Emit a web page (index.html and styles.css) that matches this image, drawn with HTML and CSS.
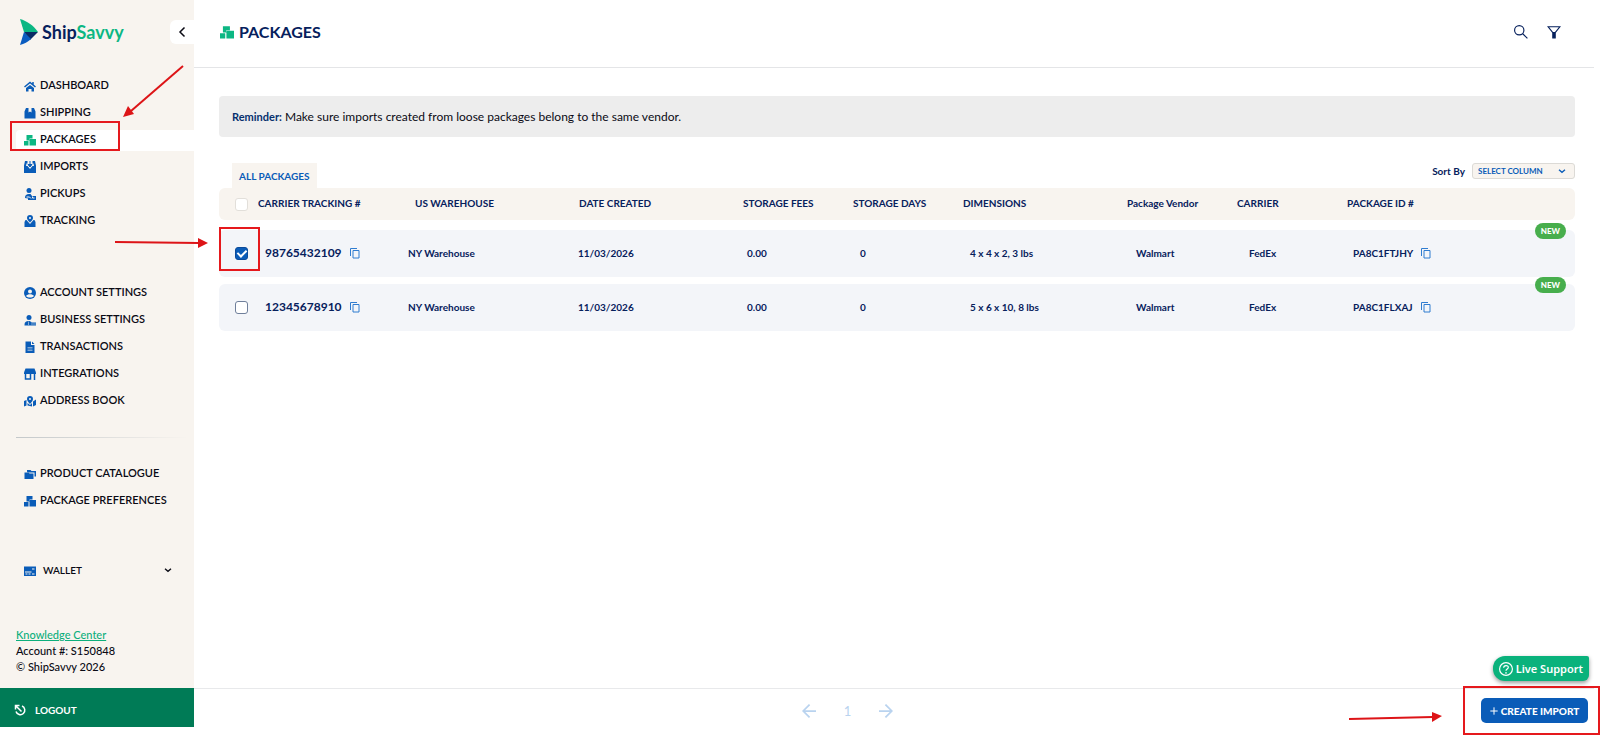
FILE: index.html
```html
<!DOCTYPE html>
<html lang="en">

<head>
    <meta charset="UTF-8">
    <meta name="viewport" content="width=device-width, initial-scale=1.0">
    <title>ShipSavvy - Packages</title>
    <link rel="stylesheet" href="styles.css">
</head>

<body>
    <!-- icon shapes -->
    <svg class="sprite" aria-hidden="true">
        <symbol id="i-home" viewBox="0 0 24 24">
            <path d="M1 14 12 5l11 9M18 4v5" fill="none" stroke="currentColor" stroke-width="3" />
            <path d="M12 10l8 6v7h-5v-5H9v5H4v-7z" fill="currentColor" />
        </symbol>
        <symbol id="i-ship" viewBox="0 0 24 24">
            <path d="M4 2h5v9l3-2 3 2V2h5l3 7v14H1V9z" fill="currentColor" />
        </symbol>
        <symbol id="i-boxes" viewBox="0 0 24 24">
            <path d="M5 2h12v7h-6v4H5zM0 14h9v9H0zM12 10h12v13H11V12z" fill="currentColor" />
        </symbol>
        <symbol id="i-import" viewBox="0 0 24 24">
            <path d="M2 0h5v5H5l-1 5h3l5 6 5-6h3l-1-5h-2V0h5l2 9v15H0V9z" fill="currentColor" />
            <path d="M12 0v8M8 7h8l-4 5z" stroke="currentColor" fill="currentColor" stroke-width="2" />
        </symbol>
        <symbol id="i-pickup" viewBox="0 0 24 24">
            <circle cx="10" cy="5" r="5" fill="currentColor" />
            <path d="M2 20c0-6 3-8 8-8h3l3 4h8v8H8v-3z" fill="currentColor" />
            <path d="M5 18h6l3 3M17 17v3h4" fill="none" stroke="#f8f4ef" stroke-width="2" />
        </symbol>
        <symbol id="i-track" viewBox="0 0 24 24">
            <path fill-rule="evenodd" d="M12 0a6 6 0 0 1 6 6c0 4-6 9-6 9S6 10 6 6a6 6 0 0 1 6-6zm0 4a2 2 0 1 0 0 4 2 2 0 0 0 0-4z" fill="currentColor" />
            <path d="M5 10H3l-2 4v10h22V14l-2-4h-2l-7 8z" fill="currentColor" />
        </symbol>
        <symbol id="i-account" viewBox="0 0 24 24">
            <circle cx="12" cy="12" r="12" fill="currentColor" />
            <circle cx="12" cy="9" r="4" fill="#f8f4ef" />
            <path d="M4 18c3-5 13-5 16 0-4 4-12 4-16 0z" fill="#f8f4ef" />
        </symbol>
        <symbol id="i-business" viewBox="0 0 24 24">
            <circle cx="10" cy="7" r="5" fill="currentColor" />
            <path d="M1 22c0-6 3-8 8-8 3 0 5 1 6 3h9v6H1z" fill="currentColor" />
            <path d="M9 15v7M14 20h10" stroke="#f8f4ef" stroke-width="1" />
        </symbol>
        <symbol id="i-doc" viewBox="0 0 24 24">
            <path d="M3 1h11v7h7v16H3zM16 1l5 5h-5z" fill="currentColor" />
            <path d="M7 13h10M7 16h10M7 19h10" stroke="#f8f4ef" stroke-width="1" />
        </symbol>
        <symbol id="i-store" viewBox="0 0 24 24">
            <path d="M3 1h18l3 8v3H0V9z" fill="currentColor" />
            <path d="M3 12v10h10V12M21 12v12" fill="none" stroke="currentColor" stroke-width="3" />
        </symbol>
        <symbol id="i-map" viewBox="0 0 24 24">
            <path fill-rule="evenodd" d="M12 2a6 6 0 0 1 6 6c0 4-6 10-6 10S6 12 6 8a6 6 0 0 1 6-6zm0 4a2 2 0 1 0 0 4 2 2 0 0 0 0-4z" fill="currentColor" />
            <path d="M0 12l5-2v11l-5 2zM7 16l5 4 4-4v7l-9-2zM18 13l6-4v11l-6 3z" fill="currentColor" />
        </symbol>
        <symbol id="i-folders" viewBox="0 0 24 24">
            <path d="M6 7V4h7l2 2h9v11h-3V9H7z" fill="currentColor" />
            <path d="M1 9h8l2 2h8v11H1z" fill="currentColor" />
        </symbol>
        <symbol id="i-wallet" viewBox="0 0 24 24">
            <path d="M0 3h24v19H0z" fill="currentColor" />
            <path d="M16 8h5M2 14h13M3 18h4M9 18h4M16 18h5" stroke="#f8f4ef" stroke-width="2" />
        </symbol>
        <symbol id="i-logout" viewBox="0 0 24 24">
            <path d="M16 4a9 9 0 1 1-12 11M3 11V3h8M4 4l11 11" fill="none" stroke="currentColor" stroke-width="3" />
        </symbol>
        <symbol id="i-copy" viewBox="0 0 24 24">
            <path d="M3 18V3h13M8 7h12v15H8z" fill="none" stroke="currentColor" stroke-width="2" />
        </symbol>
        <symbol id="i-left" viewBox="0 0 24 24">
            <path d="M17 3l-9 9 9 9" fill="none" stroke="currentColor" stroke-width="3" />
        </symbol>
        <symbol id="i-down" viewBox="0 0 24 24">
            <path d="M3 8l9 8 9-8" fill="none" stroke="currentColor" stroke-width="4" />
        </symbol>
        <symbol id="i-search" viewBox="0 0 24 24">
            <path d="M15 15l8 8M17 9A8 8 0 1 1 1 9a8 8 0 0 1 16 0z" fill="none" stroke="currentColor" stroke-width="2" />
        </symbol>
        <symbol id="i-filter" viewBox="0 0 24 24">
            <path d="M2 3h20l-8 10v9h-4v-9z" fill="none" stroke="currentColor" stroke-width="2" />
            <path d="M10 12h4v10h-4z" fill="currentColor" />
        </symbol>
        <symbol id="i-prev" viewBox="0 0 24 24">
            <path d="M24 12H3M13 1L2 12l11 11" fill="none" stroke="currentColor" stroke-width="3" />
        </symbol>
        <symbol id="i-next" viewBox="0 0 24 24">
            <path d="M0 12h21M11 1l11 11-11 11" fill="none" stroke="currentColor" stroke-width="3" />
        </symbol>
        <symbol id="i-plus" viewBox="0 0 24 24">
            <path d="M12 1v22M1 12h22" fill="none" stroke="currentColor" stroke-width="3" />
        </symbol>
        <symbol id="i-help" viewBox="0 0 24 24">
            <circle cx="12" cy="12" r="11" fill="none" stroke="currentColor" stroke-width="2" />
            <path d="M8 10c0-5 8-5 8-1 0 3-4 3-4 6M12 17v3" fill="none" stroke="currentColor" stroke-width="2" />
        </symbol>
    </svg>

    <div class="app">
        <aside class="sidebar">
            <div class="brand">
                <a class="logo" href="#">
                    <svg class="logo-mark" viewBox="0 0 18 26" aria-hidden="true">
                        <path d="M0 0c7 2 13 6 18 13H4z" fill="#0cb783" />
                        <path d="M4 13h14l-8 8z" fill="#0a2a63" />
                        <path d="M4 13l7 7c-3 3-7 5-11 6z" fill="#0a5cc0" />
                    </svg>
                    <span>Ship<span class="logo-green">Savvy</span></span>
                </a>
                <button class="collapse" type="button" aria-label="Collapse menu"><svg class="icon"><use href="#i-left" /></svg></button>
            </div>

            <nav class="nav">
                <a href="#"><svg class="icon"><use href="#i-home" /></svg>DASHBOARD</a>
                <a href="#"><svg class="icon"><use href="#i-ship" /></svg>SHIPPING</a>
                <a href="#" class="active"><svg class="icon"><use href="#i-boxes" /></svg>PACKAGES<span class="mark mark-nav"></span></a>
                <a href="#"><svg class="icon"><use href="#i-import" /></svg>IMPORTS</a>
                <a href="#"><svg class="icon"><use href="#i-pickup" /></svg>PICKUPS</a>
                <a href="#"><svg class="icon"><use href="#i-track" /></svg>TRACKING</a>
            </nav>

            <nav class="nav nav-settings">
                <a href="#"><svg class="icon"><use href="#i-account" /></svg>ACCOUNT SETTINGS</a>
                <a href="#"><svg class="icon"><use href="#i-business" /></svg>BUSINESS SETTINGS</a>
                <a href="#"><svg class="icon"><use href="#i-doc" /></svg>TRANSACTIONS</a>
                <a href="#"><svg class="icon"><use href="#i-store" /></svg>INTEGRATIONS</a>
                <a href="#"><svg class="icon"><use href="#i-map" /></svg>ADDRESS BOOK</a>
            </nav>

            <div class="divider"></div>

            <nav class="nav">
                <a href="#"><svg class="icon"><use href="#i-folders" /></svg>PRODUCT CATALOGUE</a>
                <a href="#"><svg class="icon"><use href="#i-boxes" /></svg>PACKAGE PREFERENCES</a>
            </nav>

            <button class="wallet" type="button">
                <svg class="icon"><use href="#i-wallet" /></svg>
                <span>WALLET</span>
                <svg class="icon-small"><use href="#i-down" /></svg>
            </button>

            <div class="account">
                <a href="#">Knowledge Center</a>
                <p>Account #: S150848</p>
                <p>© ShipSavvy 2026</p>
            </div>
            <button class="logout" type="button"><svg class="icon"><use href="#i-logout" /></svg>LOGOUT</button>
        </aside>

        <main class="main">
            <header class="header">
                <h1><svg class="icon-title"><use href="#i-boxes" /></svg>PACKAGES</h1>
                <div class="tools">
                    <button type="button" aria-label="Search"><svg class="icon-tool"><use href="#i-search" /></svg></button>
                    <button type="button" aria-label="Filter"><svg class="icon-tool"><use href="#i-filter" /></svg></button>
                </div>
            </header>

            <section class="content">
                <p class="reminder"><strong>Reminder:</strong> Make sure imports created from loose packages belong to the same vendor.</p>

                <div class="toolbar">
                    <button class="tab" type="button">ALL PACKAGES</button>
                    <div class="sort">
                        <label for="sort">Sort By</label>
                        <div class="select">
                            <select id="sort">
                                <option>SELECT COLUMN</option>
                            </select>
                            <svg class="icon-small"><use href="#i-down" /></svg>
                        </div>
                    </div>
                </div>

                <table class="packages">
                    <thead>
                        <tr>
                            <th><input type="checkbox" aria-label="Select all"></th>
                            <th>CARRIER TRACKING #</th>
                            <th>US WAREHOUSE</th>
                            <th>DATE CREATED</th>
                            <th>STORAGE FEES</th>
                            <th>STORAGE DAYS</th>
                            <th>DIMENSIONS</th>
                            <th>Package Vendor</th>
                            <th>CARRIER</th>
                            <th>PACKAGE ID #</th>
                        </tr>
                    </thead>
                    <tbody>
                        <tr>
                            <td><input type="checkbox" aria-label="Select 98765432109" checked><span class="mark mark-check"></span></td>
                            <td class="number">98765432109<button class="copy" type="button" aria-label="Copy"><svg class="icon"><use href="#i-copy" /></svg></button></td>
                            <td>NY Warehouse</td>
                            <td>11/03/2026</td>
                            <td>0.00</td>
                            <td>0</td>
                            <td>4 x 4 x 2, 3 lbs</td>
                            <td>Walmart</td>
                            <td>FedEx</td>
                            <td>PA8C1FTJHY<button class="copy" type="button" aria-label="Copy"><svg class="icon"><use href="#i-copy" /></svg></button><span class="badge">NEW</span></td>
                        </tr>
                        <tr>
                            <td><input type="checkbox" aria-label="Select 12345678910"></td>
                            <td class="number">12345678910<button class="copy" type="button" aria-label="Copy"><svg class="icon"><use href="#i-copy" /></svg></button></td>
                            <td>NY Warehouse</td>
                            <td>11/03/2026</td>
                            <td>0.00</td>
                            <td>0</td>
                            <td>5 x 6 x 10, 8 lbs</td>
                            <td>Walmart</td>
                            <td>FedEx</td>
                            <td>PA8C1FLXAJ<button class="copy" type="button" aria-label="Copy"><svg class="icon"><use href="#i-copy" /></svg></button><span class="badge">NEW</span></td>
                        </tr>
                    </tbody>
                </table>
            </section>

            <footer class="footer">
                <div class="pages">
                    <button type="button" aria-label="Previous page"><svg class="icon-tool"><use href="#i-prev" /></svg></button>
                    <span>1</span>
                    <button type="button" aria-label="Next page"><svg class="icon-tool"><use href="#i-next" /></svg></button>
                </div>
                <div class="create-wrap">
                    <button class="create" type="button"><svg class="icon-small"><use href="#i-plus" /></svg>CREATE IMPORT</button>
                    <span class="mark mark-create"></span>
                    <svg class="arrow arrow-create" viewBox="0 0 94 12" aria-hidden="true">
                        <path d="M1 8l84-2" />
                        <path class="tip" d="M84 1l10 4-10 6z" />
                    </svg>
                </div>
                <button class="support" type="button"><svg class="icon-tool"><use href="#i-help" /></svg>Live Support</button>
            </footer>
        </main>

        <!-- arrows of the guide -->
        <svg class="arrow arrow-nav" viewBox="0 0 62 54" aria-hidden="true">
            <path d="M60 1L8 46" />
            <path class="tip" d="M0 52l5-11 6 8z" />
        </svg>
        <svg class="arrow arrow-check" viewBox="0 0 94 12" aria-hidden="true">
            <path d="M1 5l84 1" />
            <path class="tip" d="M84 1l10 5-10 5z" />
        </svg>
    </div>
</body>

</html>
```

FILE: styles.css
```css
* {
    margin: 0;
    padding: 0;
    box-sizing: border-box;
}

body {
    font-family: Lato, "Open Sans", sans-serif;
    font-size: 11px;
    color: #0a0a14;
    background: #fff;
}

button,
select {
    font: inherit;
    color: inherit;
    border: none;
    background: none;
    cursor: pointer;
}

a {
    color: inherit;
    text-decoration: none;
}

svg {
    flex: none;
}

.sprite {
    display: none;
}

.icon {
    width: 12px;
    height: 12px;
}

.icon-small {
    width: 8px;
    height: 8px;
}

.icon-tool,
.icon-title {
    width: 14px;
    height: 14px;
}

.app {
    position: relative;
    display: flex;
    min-height: 100vh;
    padding: 0 6px 9px 0;
}

/* sidebar */
.sidebar {
    display: flex;
    flex-direction: column;
    width: 194px;
    flex: none;
    background: #f8f4ef;
}

.brand {
    display: flex;
    justify-content: space-between;
    padding: 20px 0 32px 20px;
    height: 76px;
}

.logo {
    display: flex;
    align-items: center;
    gap: 4px;
    height: 24px;
    font-size: 18px;
    font-weight: 700;
    color: #06205c;
}

.logo-mark {
    width: 18px;
    height: 26px;
}

.logo-green {
    color: #0cb783;
}

.collapse {
    display: flex;
    align-items: center;
    justify-content: center;
    width: 24px;
    height: 24px;
    border-radius: 6px 0 0 6px;
    background: #fff;
}

.nav {
    display: flex;
    flex-direction: column;
    gap: 6px;
    padding-left: 16px;
}

.nav a {
    position: relative;
    display: flex;
    align-items: center;
    gap: 4px;
    height: 21px;
    padding: 0 0 4px 8px;
    font-weight: 600;
    border-radius: 4px 0 0 4px;
}

.nav .icon,
.wallet .icon {
    margin-top: 2px;
    color: #0a5cb8;
}

.nav .active {
    background: #fff;
}

.nav .active .icon {
    color: #0cb783;
}

.nav-settings {
    margin-top: 51px;
}

.divider {
    height: 1px;
    margin: 25px 6px 26px 16px;
    background: linear-gradient(to right, #c4c8ca, #f8f4ef);
}

.wallet {
    display: flex;
    align-items: center;
    gap: 7px;
    height: 21px;
    margin-top: 47px;
    padding: 0 22px 0 24px;
    font-size: 10px;
    font-weight: 600;
}

.wallet span {
    flex: 1;
    text-align: left;
}

.account {
    margin-top: auto;
    padding: 0 16px 13px;
    line-height: 16px;
    font-weight: 500;
}

.account a {
    color: #0caf7c;
    text-decoration: underline;
}

.logout {
    display: flex;
    align-items: center;
    gap: 9px;
    height: 39px;
    padding: 4px 14px 0;
    font-size: 10px;
    font-weight: 700;
    color: #fff;
    background: #007b56;
}

/* main column */
.main {
    display: flex;
    flex-direction: column;
    flex: 1;
    min-width: 0;
}

.header {
    display: flex;
    align-items: center;
    justify-content: space-between;
    height: 68px;
    padding: 0 33px 4px 26px;
    border-bottom: 1px solid #e4e5e7;
    color: #06205c;
}

.header h1 {
    display: flex;
    align-items: center;
    gap: 5px;
    font-size: 16px;
    font-weight: 700;
}

.icon-title {
    color: #0cb783;
}

.tools {
    display: flex;
    gap: 19px;
}

.tools button,
.pages button {
    display: flex;
}

.content {
    flex: 1;
    padding: 28px 19px 20px 25px;
}

.reminder {
    padding: 0 13px;
    font-size: 12px;
    line-height: 41px;
    border-radius: 4px;
    background: #ededed;
}

.reminder strong {
    font-size: 11px;
    color: #06306e;
}

.toolbar {
    display: flex;
    justify-content: space-between;
    align-items: flex-start;
    margin-top: 26px;
    padding-left: 13px;
    font-size: 10px;
    font-weight: 700;
}

.tab {
    height: 25px;
    padding: 0 7px;
    color: #0a5cb8;
    background: #f8f4ef;
}

.sort {
    display: flex;
    align-items: center;
    gap: 7px;
    color: #06205c;
}

.select {
    position: relative;
    width: 103px;
}

.select select {
    display: block;
    width: 100%;
    height: 16px;
    padding-left: 5px;
    appearance: none;
    font-size: 8px;
    color: #0a5cb8;
    border: 1px solid #dcdad6;
    border-radius: 3px;
    background: #f8f4ef;
}

.select .icon-small {
    position: absolute;
    right: 9px;
    top: 4px;
    color: #0a5cb8;
    pointer-events: none;
}

/* packages table */
.packages,
.packages thead,
.packages tbody {
    display: block;
}

.packages {
    font-size: 10px;
    font-weight: 700;
    color: #06205c;
}

.packages tr {
    position: relative;
    display: grid;
    align-items: center;
}

.packages thead tr {
    grid-template-columns: 39px 157fr 164fr 164fr 110fr 110fr 164fr 110fr 110fr 228fr;
    height: 32px;
    border-radius: 6px;
    background: #f8f4ef;
}

.packages tbody tr {
    grid-template-columns: 46px 143fr 170fr 169fr 113fr 110fr 166fr 113fr 104fr 222fr;
    height: 47px;
    margin-top: 7px;
    border-radius: 6px;
    background: #f3f5f9;
}

.packages tbody tr:first-child {
    margin-top: 10px;
}

.packages th,
.packages td {
    display: flex;
    align-items: center;
    padding-bottom: 2px;
    text-align: left;
    white-space: nowrap;
}

.packages th:first-child,
.packages td:first-child {
    padding: 0 0 0 16px;
}

.packages .number {
    font-size: 12px;
}

.packages input {
    display: flex;
    align-items: center;
    justify-content: center;
    width: 13px;
    height: 13px;
    appearance: none;
    border: 1px solid #6f7f9b;
    border-radius: 3px;
    background: #fff;
}

.packages th input {
    border-color: #e2dfda;
}

.packages input:checked {
    border-color: #0a4a9a;
    background: #0a5cb8;
}

.packages input:checked::after {
    content: "";
    width: 4px;
    height: 7px;
    margin-bottom: 2px;
    border: solid #fff;
    border-width: 0 2px 2px 0;
    transform: rotate(45deg);
}

.copy {
    display: flex;
    margin-left: 7px;
    color: #2f7cd0;
}

.badge {
    position: absolute;
    top: -7px;
    right: 9px;
    padding: 0 6px;
    border-radius: 8px;
    font-size: 8px;
    font-weight: 900;
    line-height: 16px;
    color: #fff;
    background: #47ae4d;
}

/* bottom bar */
.footer {
    position: relative;
    display: flex;
    align-items: center;
    height: 39px;
    padding: 5px 6px 0 20px;
    border-top: 1px solid #e8e9eb;
}

.pages {
    display: flex;
    flex: 1;
    align-items: center;
    justify-content: center;
    gap: 28px;
    font-size: 13px;
    color: #b9d3ef;
}

.create-wrap {
    position: relative;
}

.create {
    display: flex;
    align-items: center;
    justify-content: center;
    gap: 3px;
    height: 25px;
    width: 107px;
    border-radius: 5px;
    font-size: 10px;
    font-weight: 900;
    color: #fff;
    background: #0a5cb8;
}

.support {
    position: absolute;
    right: 5px;
    bottom: 46px;
    display: flex;
    align-items: center;
    gap: 3px;
    height: 25px;
    padding: 0 6px;
    border-radius: 12px 2px 6px 12px;
    font-family: "Noto Sans", sans-serif;
    font-size: 11px;
    font-weight: 600;
    color: #fff;
    background: #0ab27c;
    box-shadow: 0 2px 4px rgba(0, 0, 0, .4);
}

/* red guide marks */
.mark {
    position: absolute;
    border: 2px solid #e5191d;
}

.mark-nav {
    left: -6px;
    top: -9px;
    width: 110px;
    height: 30px;
}

.mark-check {
    left: 0;
    top: -3px;
    width: 41px;
    height: 44px;
}

.mark-create {
    left: -18px;
    right: -12px;
    top: -12px;
    bottom: -12px;
}

.arrow {
    position: absolute;
    fill: none;
    stroke: #dd1417;
    stroke-width: 2;
}

.arrow .tip {
    fill: #dd1417;
    stroke: none;
}

.arrow-nav {
    left: 123px;
    top: 65px;
    width: 62px;
    height: 54px;
}

.arrow-check {
    left: 114px;
    top: 237px;
    width: 94px;
    height: 12px;
}

.arrow-create {
    right: 146px;
    top: 13px;
    width: 94px;
    height: 12px;
}
```
